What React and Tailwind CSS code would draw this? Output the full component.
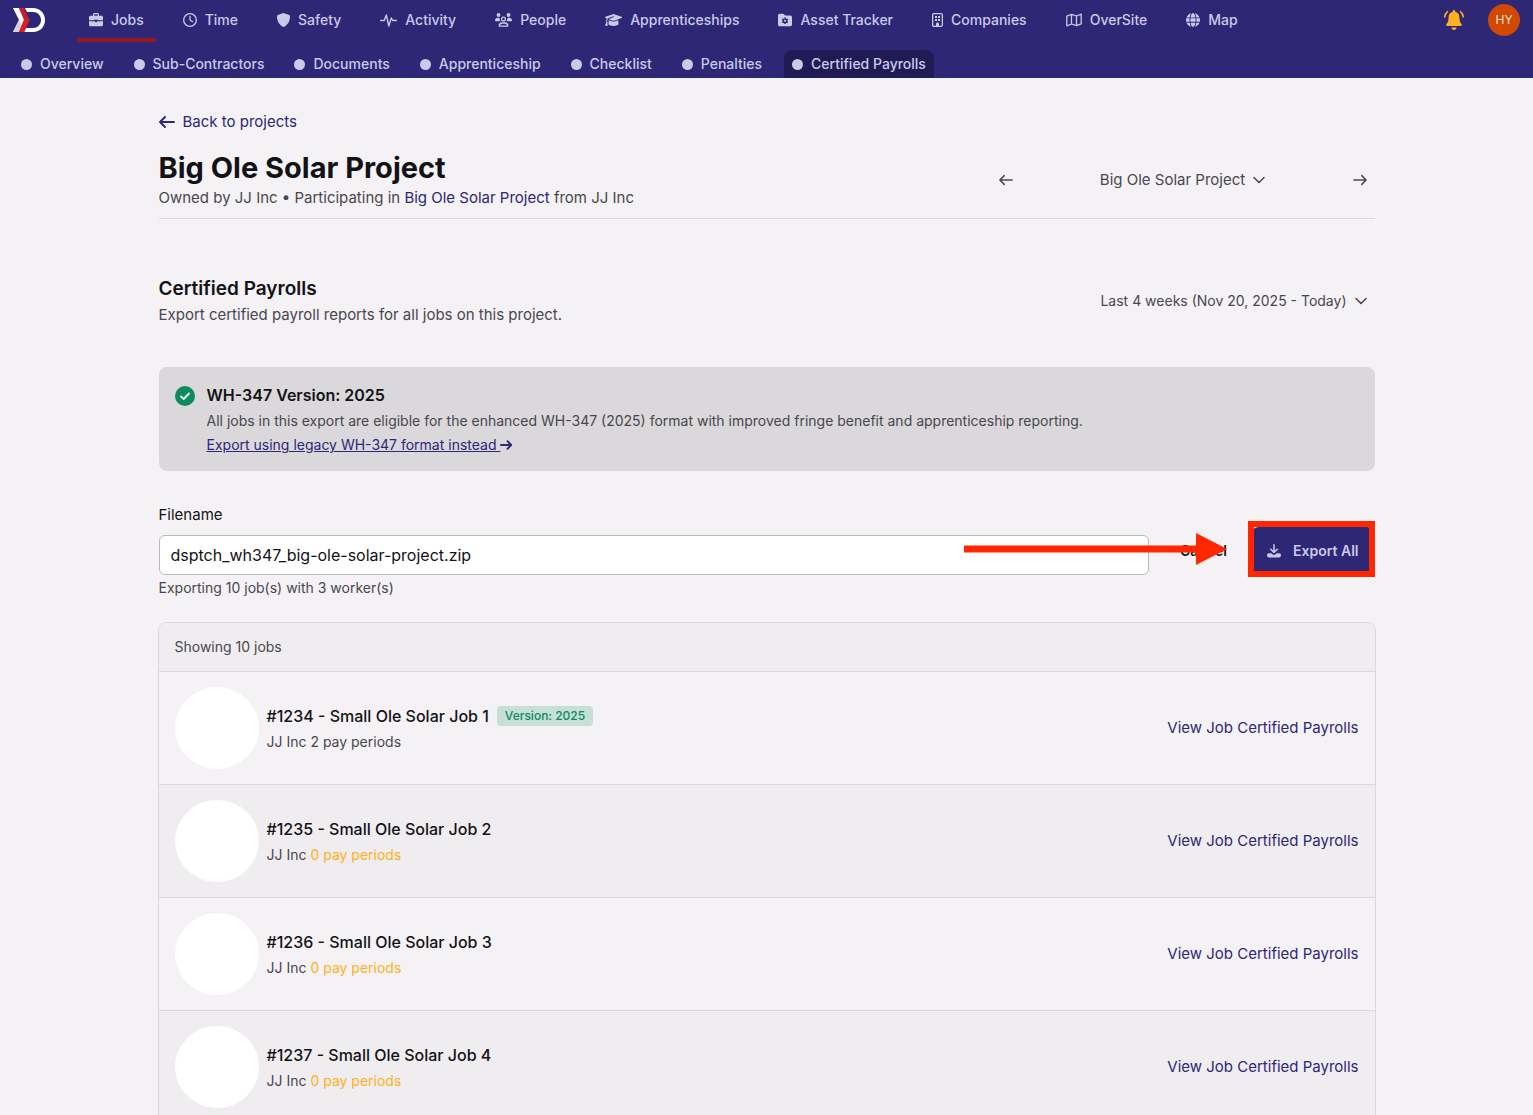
import React from "react";
import { FaRegClock, FaGraduationCap, FaGlobe } from "react-icons/fa6";

const Stroke = ({ className, children, width = 2, box = "0 0 24 24" }) => (
  <svg
    className={className}
    viewBox={box}
    fill="none"
    stroke="currentColor"
    strokeWidth={width}
    strokeLinecap="round"
    strokeLinejoin="round"
    aria-hidden="true"
  >
    {children}
  </svg>
);

const Logo = () => (
  <svg className="h-6 w-8" viewBox="0 0 32 24" aria-hidden="true">
    <path d="M0 0h6l6 12-6 12H0l6-12z" fill="#fff" />
    <path d="M0 24l6-12 3 6-3 6z" fill="#d3d2e4" />
    <path d="M12 0h8c7 0 12 5 12 12s-5 12-12 12h-9l2-4h7c4.500 0 8-3.500 8-8s-3.500-8-8-8h-6z" fill="#fff" />
    <path d="M6 0h5l5.500 12L11 24H6l5-12z" fill="#c2232b" />
    <path d="M11 12h5.500L11 24H6z" fill="#e01b22" />
  </svg>
);

const Briefcase = () => (
  <svg className="h-3.5 w-3.5" viewBox="0 0 14 14" fill="currentColor" aria-hidden="true">
    <path d="M4 2.800V1.600C4 .7 4.700 0 5.600 0h2.800C9.300 0 10 .7 10 1.600v1.200h2.500c.8 0 1.500.7 1.500 1.500v3H9v-.6H5v.6H0v-3c0-.8.7-1.500 1.500-1.500zm1.300 0h3.400V1.300H5.300z" fillRule="evenodd" />
    <path d="M0 8.200h5.200L7 9.300l1.800-1.100H14v3.600c0 .8-.7 1.500-1.500 1.500h-11C.7 13.300 0 12.600 0 11.800z" />
  </svg>
);

const Shield = () => (
  <svg className="h-3.5 w-[13px]" viewBox="0 0 13 14" fill="currentColor" aria-hidden="true">
    <path d="M6.500 0l5.700 2.100c.5.200.8.600.8 1.100 0 4.500-1.700 8.600-6.500 10.800C1.700 11.800 0 7.700 0 3.200c0-.5.3-.9.8-1.100z" />
  </svg>
);

const Pulse = () => (
  <Stroke className="h-3.5 w-[17px]" box="0 0 17 14" width={1.4}>
    <path d="M.7 7.500h3.500L6.300 2l2.500 11L11.300 5l1.400 2.500h3.600" />
  </Stroke>
);

const People = () => (
  <svg className="h-3.5 w-[17px]" viewBox="0 0 17 14" aria-hidden="true">
    <g fill="currentColor">
      <circle cx="3.500" cy="2" r="1.900" />
      <circle cx="13.500" cy="2" r="1.900" />
      <path d="M0 7.800C0 6 1.200 4.800 3 4.800c.7 0 1.300.2 1.800.5-.3 1.200 0 2.200.8 3H.5c-.3 0-.5-.2-.5-.5zM17 7.800c0-1.800-1.200-3-3-3-.7 0-1.300.2-1.800.5.3 1.200 0 2.200-.8 3h5.100c.3 0 .5-.2.500-.5z" />
    </g>
    <g fill="none" stroke="currentColor" strokeWidth="1.300">
      <circle cx="8.500" cy="6" r="1.900" />
      <path d="M4.200 13.200c0-1.900 1.300-3.200 3-3.200h2.600c1.700 0 3 1.300 3 3.200z" strokeLinejoin="round" />
    </g>
  </svg>
);

const FolderGear = () => (
  <svg className="h-3.5 w-3.5" viewBox="0 0 14 14" aria-hidden="true">
    <path d="M1.800.8h3c.5 0 .9.200 1.200.500l.9.900c.2.200.4.300.7.300h4.600c1 0 1.800.8 1.800 1.800v7.200c0 1-.8 1.800-1.800 1.800H1.800c-1 0-1.800-.8-1.800-1.800V2.600C0 1.600.8.800 1.800.800z" fill="currentColor" />
    <circle cx="7" cy="7.700" r="1.800" fill="none" stroke="#2d2776" strokeWidth="1.500" />
    <path d="M7 4.500v1M7 9.900v1M4.200 6.100l.9.500M8.900 8.800l.9.500M4.200 9.300l.9-.5M8.900 6.600l.9-.5" stroke="#2d2776" strokeWidth="1.400" />
  </svg>
);

const Building = () => (
  <svg className="h-3.5 w-[11px]" viewBox="0 0 11 14" aria-hidden="true">
    <rect x=".65" y=".65" width="9.700" height="12.700" rx="1.300" fill="none" stroke="currentColor" strokeWidth="1.300" />
    <path d="M3 3h2v2H3zM6 3h2v2H6zM3 6h2v2H3zM6 6h2v2H6zM4 14v-3c0-.8.700-1.500 1.500-1.500S7 10.200 7 11v3z" fill="currentColor" />
  </svg>
);

const MapIcon = () => (
  <Stroke className="h-3.5 w-4" box="0 0 16 14" width={1.3}>
    <path d="M.8 3.200L5.500 1.300l5 1.700 4.700-1.900v9.700l-4.700 1.900-5-1.700L.8 12.900zM5.500 1.300V11M10.500 3v9.700" />
  </Stroke>
);

const Bell = () => (
  <svg className="h-5 w-5" viewBox="0 0 20 20" aria-hidden="true">
    <g fill="#ffb020">
      <path d="M10 0c.7 0 1.200.5 1.200 1.100v.6c2.500.5 4.200 2.600 4.200 5.200 0 3.700.7 5.300 2 6.900.3.300.4.600.4 1 0 .8-.6 1.300-1.400 1.300H3.600c-.8 0-1.400-.5-1.400-1.300 0-.4.1-.7.4-1 1.300-1.600 2-3.200 2-6.900 0-2.600 1.700-4.700 4.200-5.200v-.6C8.800.5 9.300 0 10 0z" />
      <path d="M7.500 17.500h5c0 1.400-1.100 2.400-2.500 2.400s-2.500-1-2.500-2.400z" />
    </g>
    <path d="M3.500 1.600C2 2.800 1 4.600.8 6.900M16.500 1.600c1.500 1.200 2.500 3 2.700 5.300" fill="none" stroke="#ffb020" strokeWidth="1.500" strokeLinecap="round" />
  </svg>
);

const ArrowLeft = ({ className, width }) => (
  <Stroke className={className} box="0 0 16 14" width={width}>
    <path d="M15 7H1M6 2L1 7l5 5" />
  </Stroke>
);

const ArrowRight = ({ className, width }) => (
  <Stroke className={className} box="0 0 16 14" width={width}>
    <path d="M1 7h14M10 2l5 5-5 5" />
  </Stroke>
);

const Chevron = ({ className }) => (
  <Stroke className={className} box="0 0 12 8" width={1.5}>
    <path d="M1 1.500l5 5 5-5" />
  </Stroke>
);

const Download = () => (
  <svg className="h-3.5 w-3.5" viewBox="0 0 14 14" aria-hidden="true">
    <path d="M7 .8v7.400M3.700 5.200L7 8.400l3.300-3.200" fill="none" stroke="currentColor" strokeWidth="1.500" strokeLinecap="round" strokeLinejoin="round" />
    <path d="M1.900 9.300h2.300L5.700 10.500c.8.600 1.800.6 2.600 0l1.500-1.200h2.300c1 0 1.900.9 1.900 2s-.9 2.200-1.900 2.200H1.900c-1 0-1.900-1-1.900-2.200s.9-2 1.900-2z" fill="currentColor" />
  </svg>
);

const CheckBadge = () => (
  <svg className="mt-[3px] h-5 w-5 shrink-0" viewBox="0 0 20 20" aria-hidden="true">
    <circle cx="10" cy="10" r="10" fill="#0e8a5f" />
    <path d="M6 10.500l2.700 2.500L14 7.500" fill="none" stroke="#e4efea" strokeWidth="1.900" strokeLinecap="round" strokeLinejoin="round" />
  </svg>
);

const mainNav = [
  { label: "Jobs", icon: <Briefcase />, active: true },
  { label: "Time", icon: <FaRegClock className="h-3.5 w-3.5" /> },
  { label: "Safety", icon: <Shield /> },
  { label: "Activity", icon: <Pulse /> },
  { label: "People", icon: <People /> },
  { label: "Apprenticeships", icon: <FaGraduationCap className="h-3.5 w-[17px]" /> },
  { label: "Asset Tracker", icon: <FolderGear /> },
  { label: "Companies", icon: <Building /> },
  { label: "OverSite", icon: <MapIcon /> },
  { label: "Map", icon: <FaGlobe className="h-3.5 w-3.5" /> },
];

const subNav = [
  "Overview",
  "Sub-Contractors",
  "Documents",
  "Apprenticeship",
  "Checklist",
  "Penalties",
  "Certified Payrolls",
];

const jobs = [
  { title: "#1234 - Small Ole Solar Job 1", periods: 2, version: "Version: 2025" },
  { title: "#1235 - Small Ole Solar Job 2", periods: 0 },
  { title: "#1236 - Small Ole Solar Job 3", periods: 0 },
  { title: "#1237 - Small Ole Solar Job 4", periods: 0 },
];

function Header() {
  return (
    <header className="bg-[#2d2776] text-sm font-medium text-[#cbc9e8]">
      <div className="flex items-start justify-between px-[13px]">
        <div className="flex items-center">
          <a href="#home" aria-label="Home" className="mr-8 pb-0.5">
            <Logo />
          </a>
          <nav aria-label="Main" className="flex gap-[15px]">
            {mainNav.map((item) => (
              <a
                key={item.label}
                href={"#" + item.label}
                className={
                  "flex h-[42px] items-center gap-2 border-b-4 px-3 pt-0.5 " +
                  (item.active ? "border-[#951a1d]" : "border-transparent")
                }
              >
                {item.icon}
                {item.label}
              </a>
            ))}
          </nav>
        </div>
        <div className="flex items-center gap-6 pt-1">
          <button type="button" aria-label="Notifications">
            <Bell />
          </button>
          <button
            type="button"
            className="flex h-8 w-8 items-center justify-center rounded-full bg-[#d14900] text-xs font-normal text-[#f5e3da]"
          >
            HY
          </button>
        </div>
      </div>
      <nav aria-label="Project" className="mt-2 flex gap-3.5 pl-[13px]">
        {subNav.map((label) => (
          <a
            key={label}
            href={"#" + label}
            className={
              "flex h-7 items-center gap-2 rounded-t-lg px-2 " +
              (label === "Certified Payrolls" ? "bg-[#211b55]" : "")
            }
          >
            <span className="h-[11px] w-[11px] rounded-full bg-current" />
            {label}
          </a>
        ))}
      </nav>
    </header>
  );
}

function JobRow({ job }) {
  return (
    <li className="flex items-center justify-between border-t border-[#dad8dc] px-4 py-[15px] even:bg-[#efedf0]">
      <div className="flex items-center gap-2">
        <div className="h-[82px] w-[84px] rounded-[50%] bg-white" />
        <div>
          <div className="flex items-center gap-2">
            <h3 className="font-medium text-[#131215]">{job.title}</h3>
            {job.version && (
              <span className="rounded bg-[#c6dfd7] px-2 py-0.5 text-xs font-medium text-[#0e8a5f]">
                {job.version}
              </span>
            )}
          </div>
          <p className="mt-1 text-sm">
            JJ Inc{" "}
            <span className={job.periods === 0 ? "text-[#ffb020]" : ""}>{job.periods} pay periods</span>
          </p>
        </div>
      </div>
      <a href="#job" className="text-[15px] leading-6 text-[#2d2776]">
        View Job Certified Payrolls
      </a>
    </li>
  );
}

export default function App() {
  return (
    <div className="h-screen overflow-hidden bg-[#f4f2f5] font-['Inter',sans-serif] text-[#49474d]">
      <Header />
      <main className="mx-auto max-w-7xl px-8 pt-8">
        <a href="#projects" className="flex w-fit items-center gap-2 text-[15px] leading-6 text-[#2d2776]">
          <ArrowLeft className="h-3.5 w-4" width={1.9} />
          Back to projects
        </a>

        <div className="mt-4 flex items-center justify-between border-b border-[#dad8dc] pb-2">
          <div>
            <h1 className="text-[29px] leading-9 font-bold text-[#131215]">Big Ole Solar Project</h1>
            <p className="text-[15px] leading-6">
              Owned by JJ Inc • Participating in{" "}
              <a href="#project" className="text-[#2d2776]">
                Big Ole Solar Project
              </a>{" "}
              from JJ Inc
            </p>
          </div>
          <div className="flex w-96 items-center justify-between px-2 text-[15px] leading-6">
            <button type="button" aria-label="Previous project">
              <ArrowLeft className="h-3.5 w-3.5" width={1.7} />
            </button>
            <button type="button" className="flex items-center gap-2">
              Big Ole Solar Project
              <Chevron className="h-2 w-3" />
            </button>
            <button type="button" aria-label="Next project">
              <ArrowRight className="h-3.5 w-3.5" width={1.7} />
            </button>
          </div>
        </div>

        <section className="mt-14 flex items-center justify-between">
          <div>
            <h2 className="text-[19px] leading-7 font-semibold text-[#131215]">Certified Payrolls</h2>
            <p className="text-[15px] leading-6">Export certified payroll reports for all jobs on this project.</p>
          </div>
          <button type="button" className="flex items-center gap-2 px-2 text-sm">
            Last 4 weeks (Nov 20, 2025 - Today)
            <Chevron className="h-2 w-3" />
          </button>
        </section>

        <section className="mt-10 flex gap-3 rounded-lg bg-[#dad8db] p-4 text-sm">
          <CheckBadge />
          <div>
            <h3 className="text-base font-semibold text-[#131215]">WH-347 Version: 2025</h3>
            <p className="mt-1">
              All jobs in this export are eligible for the enhanced WH-347 (2025) format with improved fringe benefit
              and apprenticeship reporting.
            </p>
            <a href="#legacy" className="mt-1 flex items-center text-[#2d2776]">
              <span className="whitespace-pre underline">Export using legacy WH-347 format instead </span>
              <ArrowRight className="h-3 w-3" width={2.4} />
            </a>
          </div>
        </section>

        <form className="mt-8" onSubmit={(e) => e.preventDefault()}>
          <div className="flex items-end">
            <div className="mr-[15px] flex-1">
              <label htmlFor="filename" className="block text-[15px] leading-6 text-[#131215]">
                Filename
              </label>
              <input
                id="filename"
                defaultValue="dsptch_wh347_big-ole-solar-project.zip"
                className="mt-2 block h-10 w-full rounded-md border border-[#bab8bd] bg-white px-[11px] text-[#131215]"
              />
            </div>
            <button type="button" className="mr-2 h-12 px-4 text-sm font-semibold text-[#131215]">
              Cancel
            </button>
            <div className="relative">
              <button
                type="submit"
                className="flex h-12 items-center gap-3 rounded-lg bg-[#2d2776] px-4 text-sm font-semibold text-[#cbc9e8]"
              >
                <Download />
                Export All
              </button>
              <div className="pointer-events-none absolute -top-1.5 right-0 -bottom-0.5 -left-[3px] border-[6px] border-[#ff2600]" />
              <svg
                className="pointer-events-none absolute top-1.5 right-full mr-6 h-8 w-[263px]"
                viewBox="0 0 263 32"
                fill="#ff2600"
                aria-hidden="true"
              >
                <path d="M0 12.500h232V0l31 16-31 16V19.500H0z" />
              </svg>
            </div>
          </div>
          <p className="mt-[3px] text-sm">Exporting 10 job(s) with 3 worker(s)</p>
        </form>

        <section className="-mx-px mt-6 overflow-hidden rounded-t-lg border border-[#dad8dc]">
          <p className="bg-[#efedf0] px-4 py-3.5 text-sm">Showing 10 jobs</p>
          <ul>
            {jobs.map((job) => (
              <JobRow key={job.title} job={job} />
            ))}
          </ul>
        </section>
      </main>
    </div>
  );
}
